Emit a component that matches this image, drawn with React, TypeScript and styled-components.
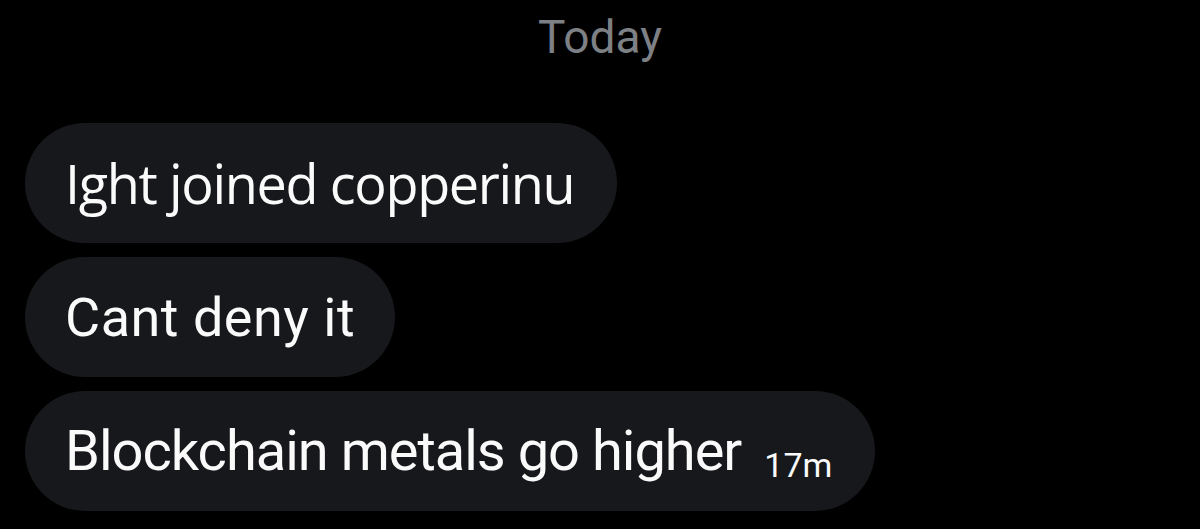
import React from "react";
import styled, { createGlobalStyle } from "styled-components";

const Global = createGlobalStyle`
  html, body { margin: 0; padding: 0; background: #000; }
  body { width: 1200px; height: 529px; overflow: hidden; }
`;

const Screen = styled.div`
  width: 1200px;
  height: 529px;
  background: #000;
  display: flex;
  flex-direction: column;
  box-sizing: border-box;
  padding: 0 0 0 25px;
`;

const DateLabel = styled.div`
  font-family: Roboto, "Liberation Sans", sans-serif;
  font-size: 46px;
  color: #7d8085;
  text-align: center;
  height: 70px;
  line-height: 74px;
  margin-left: -25px;
  margin-bottom: 53px;
`;

const Thread = styled.div`
  display: flex;
  flex-direction: column;
  align-items: flex-start;
  gap: 14px;
`;

const Bubble = styled.div<{ $font: string; $size: number; $right: number; $track: number }>`
  height: 120px;
  box-sizing: border-box;
  border-radius: 60px;
  background: #17181b;
  color: #fafafa;
  display: flex;
  align-items: center;
  padding: 0 ${(p) => p.$right}px 0 40px;
  font-family: ${(p) => p.$font};
  font-size: ${(p) => p.$size}px;
  letter-spacing: ${(p) => p.$track}px;
  white-space: nowrap;
`;

const Time = styled.span`
  font-family: Roboto, "Liberation Sans", sans-serif;
  font-size: 34px;
  letter-spacing: 0;
  margin-left: 23px;
  position: relative;
  top: 14px;
`;

export default function App() {
  return (
    <>
      <Global />
      <Screen>
        <DateLabel>Today</DateLabel>
        <Thread>
          <Bubble $font={'"Open Sans", sans-serif'} $size={54} $right={43} $track={-1.35}>
            Ight joined copperinu
          </Bubble>
          <Bubble $font={'Roboto, sans-serif'} $size={54} $right={40} $track={0.5}>
            Cant deny it
          </Bubble>
          <Bubble $font={'Roboto, sans-serif'} $size={56} $right={43} $track={-1}>
            Blockchain metals go higher
            <Time>17m</Time>
          </Bubble>
        </Thread>
      </Screen>
    </>
  );
}
